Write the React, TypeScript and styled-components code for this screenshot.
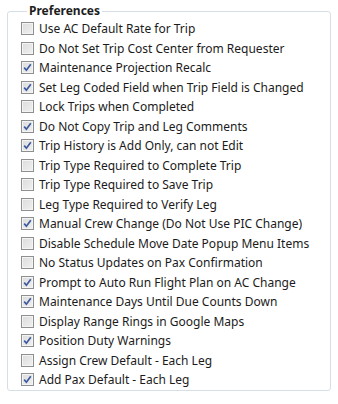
import styled, { createGlobalStyle } from "styled-components";

const GlobalStyle = createGlobalStyle`
  body {
    margin: 0;
    background: #ffffff;
    font-family: "Noto Sans", "Open Sans", sans-serif;
    color: #1b1b1b;
  }
`;

type Pref = { label: string; checked: boolean };

const prefs: Pref[] = [
  { label: "Use AC Default Rate for Trip", checked: false },
  { label: "Do Not Set Trip Cost Center from Requester", checked: false },
  { label: "Maintenance Projection Recalc", checked: true },
  { label: "Set Leg Coded Field when Trip Field is Changed", checked: true },
  { label: "Lock Trips when Completed", checked: false },
  { label: "Do Not Copy Trip and Leg Comments", checked: true },
  { label: "Trip History is Add Only, can not Edit", checked: true },
  { label: "Trip Type Required to Complete Trip", checked: false },
  { label: "Trip Type Required to Save Trip", checked: false },
  { label: "Leg Type Required to Verify Leg", checked: false },
  { label: "Manual Crew Change (Do Not Use PIC Change)", checked: true },
  { label: "Disable Schedule Move Date Popup Menu Items", checked: false },
  { label: "No Status Updates on Pax Confirmation", checked: false },
  { label: "Prompt to Auto Run Flight Plan on AC Change", checked: true },
  { label: "Maintenance Days Until Due Counts Down", checked: true },
  { label: "Display Range Rings in Google Maps", checked: false },
  { label: "Position Duty Warnings", checked: true },
  { label: "Assign Crew Default - Each Leg", checked: false },
  { label: "Add Pax Default - Each Leg", checked: true },
];

const App = () => {
  return (
    <Page>
      <GlobalStyle />
      <Group>
        <Legend>Preferences</Legend>
        <List>
          {prefs.map((p) => (
            <Row key={p.label}>
              <Box>
                {p.checked && (
                  <svg width="9" height="9" viewBox="0 0 9 9">
                    <path
                      d="M1.2 4.6 L3.4 7.2 L7.8 1.2"
                      fill="none"
                      stroke="#3d5a9e"
                      strokeWidth="1.7"
                    />
                  </svg>
                )}
              </Box>
              <Label>{p.label}</Label>
            </Row>
          ))}
        </List>
      </Group>
    </Page>
  );
};

export default App;

const Page = styled.div`
  padding: 4px 0 0 7px;
  width: 324px;
`;

const Group = styled.fieldset`
  margin: 0;
  padding: 1px 0 0 13px;
  border: 1px solid #d5dfe5;
  border-radius: 3px;
  min-width: 0;
`;

const Legend = styled.legend`
  margin-left: 6px;
  padding: 0 2px;
  font-size: 12px;
  line-height: 14px;
  font-weight: bold;
  color: #1e1e1e;
`;

const List = styled.div`
  display: flex;
  flex-direction: column;
`;

const Row = styled.div`
  display: flex;
  align-items: center;
  height: 19.5px;
  gap: 5px;
`;

const Box = styled.span`
  box-sizing: border-box;
  width: 13px;
  height: 13px;
  flex: none;
  display: flex;
  align-items: center;
  justify-content: center;
  border: 1px solid #8e8f8f;
  background: linear-gradient(135deg, #dcdcdc 0%, #f0f0f0 100%);
  box-shadow: inset 0 0 0 1px #f4f4f4;
`;

const Label = styled.span`
  font-size: 12px;
  white-space: nowrap;
`;
